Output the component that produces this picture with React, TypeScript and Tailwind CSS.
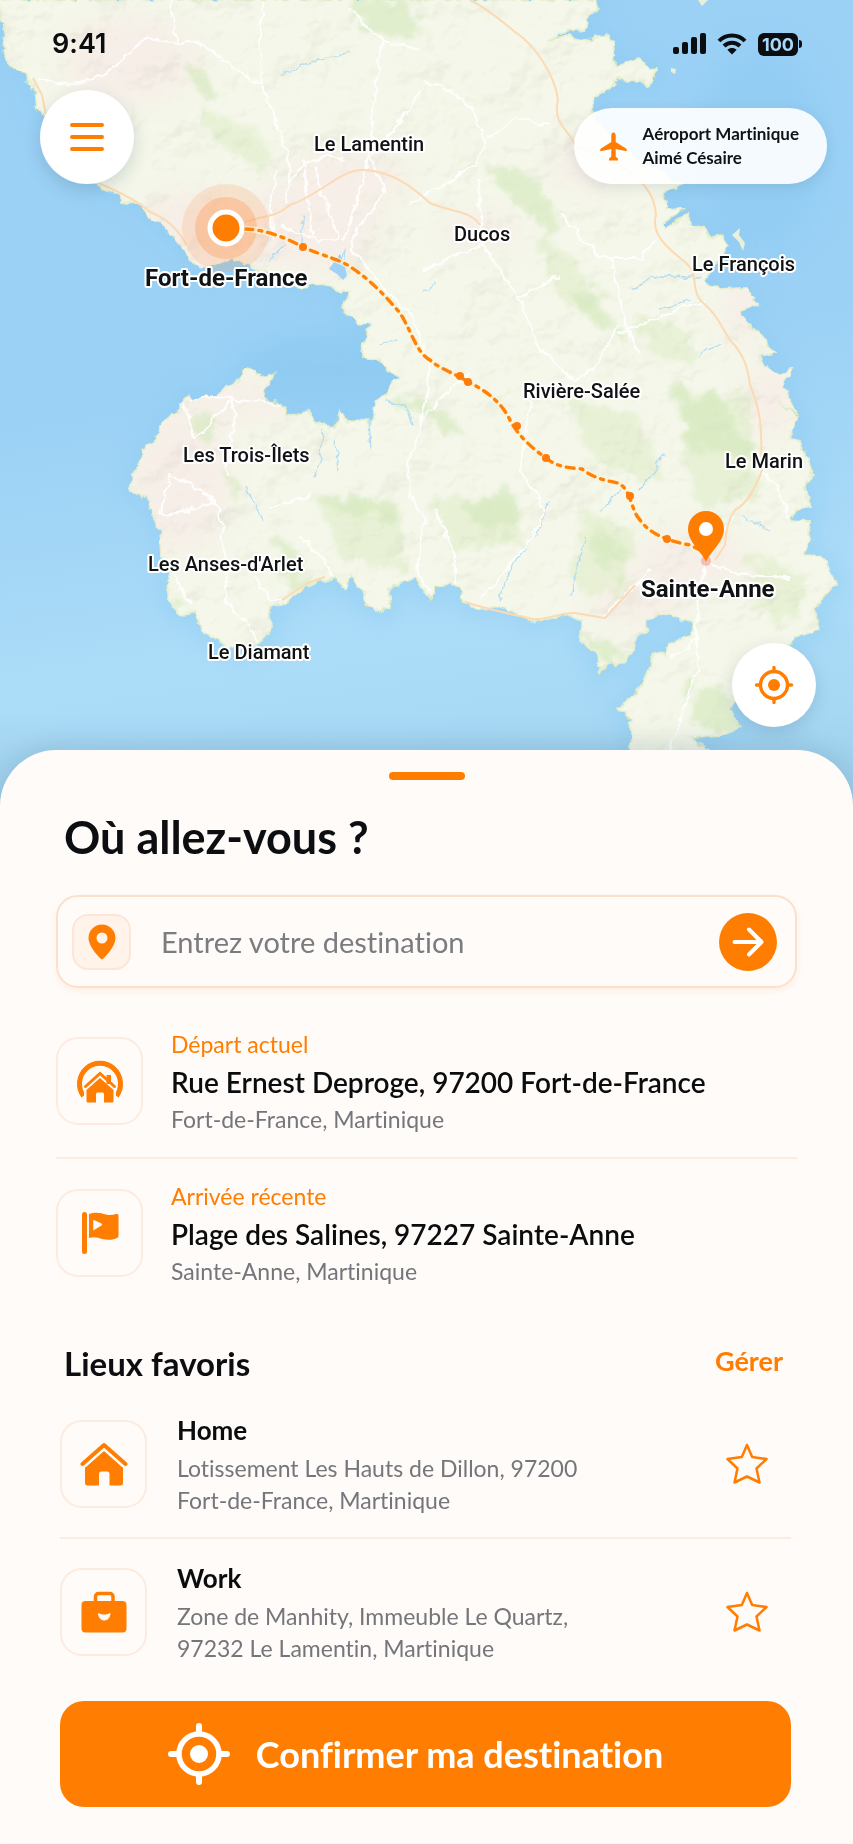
import type { ReactNode } from "react";

const LAND =
  "M0 0 L0 18 L4 32 L2 50 L8 62 L14 70 L25 73 L33 85 L35 98 L36 110 L46 116 L60 140 L80 168 L96 184 L103 188 L118 194 L122 201 L140 203 L150 218 L163 226 L174 236 L184 250 L192 264 L202 268 L218 262 L232 257 L246 265 L262 271 L282 277 L303 290 L310 282 L330 287 L350 292 L342 308 L358 322 L370 325 L364 342 L363 358 L382 362 L392 374 L400 378 L383 396 L375 402 L371 422 L360 418 L348 424 L340 411 L334 428 L322 424 L314 420 L309 410 L303 415 L287 413 L278 402 L265 400 L263 390 L274 375 L262 378 L248 369 L237 381 L214 396 L195 401 L187 394 L180 410 L166 418 L159 428 L157 440 L142 449 L143 458 L134 472 L130 490 L146 498 L152 515 L160 530 L162 553 L170 572 L167 592 L172 608 L182 616 L195 612 L202 630 L220 642 L236 650 L256 645 L272 628 L270 609 L284 603 L300 592 L318 581 L336 577 L346 590 L352 576 L362 590 L365 603 L382 613 L390 605 L388 588 L404 584 L415 577 L424 592 L432 598 L436 587 L450 581 L462 590 L464 602 L480 609 L502 607 L533 621 L565 614 L583 621 L580 640 L597 655 L600 673 L612 660 L617 665 L630 655 L637 638 L648 630 L647 620 L659 613 L675 618 L697 622 L691 637 L670 642 L666 655 L655 652 L650 668 L638 690 L618 709 L632 718 L630 750 L632 820 L712 820 L709 750 L690 739 L720 737 L741 727 L730 710 L745 690 L775 662 L795 638 L820 630 L815 610 L825 594 L835 583 L829 565 L818 556 L806 555 L810 521 L790 520 L800 507 L812 505 L804 490 L813 474 L800 442 L790 440 L795 416 L779 400 L795 412 L783 385 L793 368 L780 376 L768 371 L760 357 L774 352 L756 331 L742 318 L740 311 L757 305 L746 288 L720 289 L704 280 L716 264 L730 246 L722 235 L710 238 L705 228 L690 225 L688 214 L665 230 L662 224 L683 209 L666 208 L663 194 L682 185 L660 170 L620 150 L590 112 L598 94 L610 88 L620 78 L640 80 L650 88 L656 70 L640 61 L615 66 L613 42 L605 35 L592 40 L565 36 L546 42 L563 32 L585 30 L588 15 L598 10 L595 0 Z";

const ROUTE =
  "M245 229 C262 229 285 237 303 247 C325 257 340 259 352 268 C372 281 388 299 400 313 C412 332 416 352 430 360 C441 370 455 373 468 382 C485 390 500 401 509 418 C517 435 533 449 546 458 C558 468 572 468 582 469 C593 478 607 481 618 483 C632 490 630 509 640 520 C649 533 667 541 690 545 L700 550";

const WAYPOINTS = [
  [303, 247],
  [460, 376],
  [468, 382],
  [517, 426],
  [546, 458],
  [630, 496],
  [667, 539],
];

const PLACES = [
  { name: "Le Lamentin", x: 314, y: 151 },
  { name: "Ducos", x: 454, y: 241 },
  { name: "Le François", x: 692, y: 271 },
  { name: "Rivière-Salée", x: 523, y: 398 },
  { name: "Les Trois-Îlets", x: 183, y: 462 },
  { name: "Le Marin", x: 725, y: 468 },
  { name: "Les Anses-d'Arlet", x: 148, y: 571 },
  { name: "Le Diamant", x: 208, y: 659 },
];

const ROADS = [
  "M172 0 C170 20 178 30 177 45 L190 40 C215 48 222 62 240 72 C252 80 258 82 262 84",
  "M263 0 C262 30 258 60 262 84 C268 110 280 125 285 145 C292 160 290 180 285 205",
  "M177 45 C150 30 135 45 122 58 C110 75 70 95 36 78",
  "M420 50 C400 46 390 40 382 42 C378 70 374 110 370 150 C365 175 355 205 345 240",
  "M382 42 L366 26 L350 8 M420 90 L410 110 C400 120 385 140 370 158",
  "M370 158 L385 190 C370 220 350 230 352 250 L385 290 L412 316",
  "M340 238 C320 245 300 235 280 225 M345 160 C320 150 300 165 290 180",
  "M423 82 C450 88 470 100 478 125 L486 143 L476 165 C440 190 425 190 412 205",
  "M486 140 L515 118 L550 125 M478 180 L480 220 L483 245 L520 300 L540 350 C560 360 565 380 575 382 L600 360 L618 325",
  "M483 245 L455 255 L423 270 M520 297 L560 275 M560 215 L580 235 L600 258 L640 258 L655 240",
  "M618 335 L650 320 L680 308 L705 302 M610 258 L625 320 L640 355",
  "M423 420 C440 400 450 385 470 375 M530 400 L520 470 L545 510 L530 540 L480 600",
  "M412 316 L430 370 L420 430 C408 450 405 480 412 500 L425 520 C415 560 415 580 430 590",
  "M185 405 L195 440 L232 400 C240 420 225 450 228 475 M190 400 L215 396 C245 403 260 400 280 405",
  "M160 515 L170 475 L200 490 L218 505 C225 530 220 545 228 570 L226 605 L245 620 L258 642",
  "M160 515 L190 510 L215 500 M168 560 L190 605 M255 575 L270 600 L282 600",
  "M270 508 L310 495 M300 535 L325 560 L332 575",
  "M455 582 L455 555 L435 510 M705 562 L698 600 L697 640 L670 658 M697 640 L698 670 L680 720 L670 752",
  "M705 562 L745 575 L790 578 M735 515 L700 555 M760 470 L780 490 L790 520",
  "M650 570 L620 600 L600 618",
  "M315 165 L322 195 L330 215 L340 238 M305 160 L308 200 L312 235 M276 170 L270 205 L275 240",
];

const HIGHWAYS = [
  "M470 0 C490 10 500 20 515 32 C535 45 555 75 558 100 C552 125 570 130 575 145 L620 165 C650 185 655 200 656 215 C650 235 670 250 685 262 C700 275 690 285 700 300 C718 315 720 325 730 340 C745 355 748 370 750 385 C765 420 760 440 762 470 C755 490 745 505 735 510 C728 520 726 530 725 545 L715 560",
  "M245 222 C265 215 275 218 290 205 C320 195 340 170 362 170 C385 170 405 180 430 203 C450 212 470 210 480 225",
  "M33 78 L42 95 L46 115 M98 183 C120 192 140 203 150 212 C170 220 180 232 186 245",
  "M282 600 C295 592 305 582 325 577 M465 602 C490 610 515 615 533 619 C550 620 560 612 575 613 L605 618 L635 585",
];

const WOODS = [
  "M365 0 L410 0 L420 30 L400 40 L370 35 L352 22 Z",
  "M185 60 L205 75 L215 105 L200 95 Z",
  "M530 170 L545 190 L540 205 L532 190 Z",
  "M480 160 L520 175 L540 180 L560 235 L548 250 L540 220 L510 200 Z",
  "M575 290 L610 290 L600 300 L622 335 L605 330 L580 310 Z",
  "M670 390 L700 400 L720 395 L740 435 L760 445 L740 460 L690 450 L685 430 Z",
  "M190 420 L210 408 L216 425 L205 440 L196 435 Z",
  "M225 470 L245 490 L240 505 L228 490 Z",
  "M315 495 L370 495 L400 510 L380 520 L320 505 Z",
  "M275 535 L295 550 L310 585 L290 590 L280 560 Z",
  "M385 395 L430 402 L430 415 L392 402 Z",
  "M470 510 L505 485 L525 520 L500 530 L475 525 Z",
  "M600 530 L625 545 L610 575 L595 560 Z",
  "M695 685 L725 690 L740 725 L720 735 L690 720 Z",
  "M168 592 L188 605 L180 616 L170 605 Z",
  "M585 635 L625 650 L600 672 L598 655 Z",
  "M423 405 L455 420 L470 440 L440 432 Z",
];

const GROVES = [
  "M200 110 L260 130 L275 165 L240 160 L215 140 Z",
  "M540 240 L575 260 L600 320 L570 310 L550 280 Z",
  "M570 400 L640 410 L660 480 L610 470 L580 440 Z",
  "M680 390 L750 395 L755 500 L700 510 L685 460 Z",
  "M320 500 L400 505 L410 570 L340 560 Z",
  "M580 510 L640 530 L620 600 L575 590 Z",
  "M430 500 L520 495 L520 540 L450 550 Z",
  "M640 320 L700 330 L690 360 L640 350 Z",
  "M750 560 L810 570 L800 620 L750 610 Z",
];

const URBAN = [
  [195, 235, 70, 45],
  [310, 225, 70, 50],
  [350, 180, 60, 30],
  [180, 480, 50, 75],
  [240, 400, 60, 20],
  [480, 232, 40, 18],
  [745, 310, 22, 36],
  [770, 400, 26, 40],
  [690, 560, 60, 28],
  [640, 600, 50, 26],
  [130, 60, 70, 45],
  [590, 165, 40, 24],
];

const STREAMS = [
  "M280 75 C300 68 308 60 315 60 C330 58 340 55 350 52",
  "M303 215 C300 225 303 235 302 248 M270 260 L285 245 M334 262 L345 252 L340 280",
  "M322 430 L320 460 L315 475 M368 420 L370 450 M335 440 L338 470",
  "M500 600 L510 570 L540 525 L550 500 M570 595 L580 555 L585 540",
  "M640 490 L665 455 M600 510 L625 485 M630 290 L660 275 L700 278",
  "M245 485 L262 520 M423 290 L435 285 M770 530 L740 515",
  "M660 310 L690 300 M700 355 L720 345 M380 345 L395 340 M385 400 L405 405 L412 425",
];

function MartiniqueMap() {
  return (
    <svg viewBox="0 0 853 820" className="block h-auto w-full" role="img" aria-label="Carte du sud de la Martinique">
      <defs>
        <linearGradient id="sea" x1="0" y1="0" x2="0.15" y2="1">
          <stop offset="0" stopColor="#9bd1f5" />
          <stop offset="0.5" stopColor="#9bd1f5" />
          <stop offset="0.82" stopColor="#abdcf8" />
          <stop offset="1" stopColor="#a6d8f4" />
        </linearGradient>
        <linearGradient id="sheetShade" x1="0" y1="0" x2="0" y2="1">
          <stop offset="0" stopColor="#5b7f96" stopOpacity="0" />
          <stop offset="1" stopColor="#5b7f96" stopOpacity="0.18" />
        </linearGradient>
        <filter id="coast" x="-2%" y="-2%" width="104%" height="104%">
          <feTurbulence type="fractalNoise" baseFrequency="0.09" numOctaves="3" seed="4" />
          <feDisplacementMap in="SourceGraphic" scale="9" xChannelSelector="R" yChannelSelector="G" />
        </filter>
        <filter id="relief" x="0" y="0" width="100%" height="100%" colorInterpolationFilters="sRGB">
          <feTurbulence type="fractalNoise" baseFrequency="0.016 0.02" numOctaves="4" seed="11" result="n" />
          <feDiffuseLighting in="n" surfaceScale="6" diffuseConstant="1.18" lightingColor="#ffffff">
            <feDistantLight azimuth="225" elevation="60" />
          </feDiffuseLighting>
          <feColorMatrix
            type="matrix"
            values="0.5 0 0 0 0.5  0 0.5 0 0 0.5  0 0 0.5 0 0.48  0 0 0 1 0"
          />
        </filter>
        <filter id="soft" x="-50%" y="-50%" width="200%" height="200%">
          <feGaussianBlur stdDeviation="14" />
        </filter>
        <filter id="softSmall" x="-30%" y="-30%" width="160%" height="160%">
          <feTurbulence type="fractalNoise" baseFrequency="0.06" numOctaves="3" seed="8" result="t" />
          <feDisplacementMap in="SourceGraphic" in2="t" scale="38" result="d" />
          <feGaussianBlur in="d" stdDeviation="2" />
        </filter>
        <filter id="depth" x="-10%" y="-10%" width="120%" height="120%">
          <feGaussianBlur stdDeviation="9" />
        </filter>
        <clipPath id="landClip">
          <path d={LAND} />
        </clipPath>
      </defs>

      <rect width="853" height="820" fill="url(#sea)" />
      <ellipse cx="330" cy="370" rx="90" ry="40" fill="#88c6f1" opacity="0.5" filter="url(#soft)" />
      <ellipse cx="760" cy="150" rx="70" ry="110" fill="#8ac8f2" opacity="0.4" filter="url(#soft)" />
      <path d={LAND} fill="none" stroke="#8ecaf2" strokeWidth="16" opacity="0.5" filter="url(#depth)" />

      <g filter="url(#coast)">
        <path d={LAND} fill="#eff3e1" stroke="#e0edca" strokeWidth="2" />
        <g clipPath="url(#landClip)">
          {URBAN.map(([cx, cy, rx, ry]) => (
            <ellipse key={`${cx}-${cy}`} cx={cx} cy={cy} rx={rx} ry={ry} fill="#f6eee8" filter="url(#soft)" />
          ))}
          <g fill="#dfedc9" opacity="0.6" filter="url(#softSmall)">
            {GROVES.map((d) => (
              <path key={d} d={d} />
            ))}
          </g>
          <rect width="853" height="820" filter="url(#relief)" className="mix-blend-multiply" opacity="0.32" />
          <g fill="#d3e8bb" opacity="0.6" filter="url(#softSmall)">
            {WOODS.map((d) => (
              <path key={d} d={d} />
            ))}
          </g>
        </g>
      </g>
      <g fill="#e8f0d8">
        <path d="M732 235 l8 -7 l-1 7 l6 8 l-2 8 l-4 -9z" />
        <path d="M671 68 l5 1 l-1 5 l-4 -2z" />
        <path d="M698 0 h10 l-6 6z" />
      </g>
      <g fill="none" stroke="#b2dcf3" strokeWidth="1.3" strokeLinecap="round" filter="url(#coast)">
        {STREAMS.map((d) => (
          <path key={d} d={d} />
        ))}
      </g>
      <path d="M340 254 l4 8 l3 14 l-4 4 l-6 -6 l-8 -5z" fill="#9fd2f4" />
      <g fill="none" stroke="#ffffff" strokeWidth="2" strokeLinejoin="round" opacity="0.9" filter="url(#coast)">
        {ROADS.map((d) => (
          <path key={d} d={d} />
        ))}
      </g>
      <g fill="none" stroke="#fcdab3" strokeWidth="2" strokeLinejoin="round">
        {HIGHWAYS.map((d) => (
          <path key={d} d={d} />
        ))}
      </g>

      <circle cx="226" cy="228" r="44" fill="#ff8a3a" opacity="0.16" />
      <circle cx="226" cy="228" r="31" fill="#ff7f2a" opacity="0.26" />
      <path d={ROUTE} fill="none" stroke="#fff3d6" strokeWidth="6" opacity="0.75" />
      <path d={ROUTE} fill="none" stroke="#ff8208" strokeWidth="3.4" strokeLinecap="round" strokeDasharray="8 6 3 6" />
      {WAYPOINTS.map(([cx, cy]) => (
        <circle key={cx} cx={cx} cy={cy} r="4" fill="#ff7c08" />
      ))}
      <circle cx="226" cy="228" r="16" fill="#ff7d00" stroke="#fff" strokeWidth="5" />

      <circle cx="706" cy="561" r="5" fill="#f3a89a" opacity="0.7" />
      <path
        d="M706 562 C702 552 688 542 688 529 A18 18 0 0 1 724 529 C724 542 710 552 706 562Z"
        fill="#ff7d00"
      />
      <circle cx="706" cy="529" r="7" fill="#fff" />

      <g
        className="font-['Roboto','Liberation_Sans',sans-serif]"
        fill="#101214"
        stroke="#ffffff"
        strokeWidth="4"
        strokeLinejoin="round"
        paintOrder="stroke"
      >
        {PLACES.map((p) => (
          <text key={p.name} x={p.x} y={p.y} fontSize="20" fontWeight="500">
            {p.name}
          </text>
        ))}
        <text x="145" y="286" fontSize="24" fontWeight="700">
          Fort-de-France
        </text>
        <text x="641" y="597" fontSize="24" fontWeight="700">
          Sainte-Anne
        </text>
      </g>
      <rect y="715" width="853" height="105" fill="url(#sheetShade)" />
    </svg>
  );
}

function StatusBar() {
  return (
    <div className="flex items-center justify-between pr-[51px] pl-[52px] font-['Inter','Liberation_Sans',sans-serif] text-[#0b0d10]">
      <span className="text-[27px] leading-8 font-semibold">9:41</span>
      <div className="flex items-center gap-[11px]">
        <svg width="33" height="22" viewBox="0 0 33 22" fill="currentColor" aria-hidden="true">
          <rect x="0" y="14" width="6" height="7" rx="2" />
          <rect x="9" y="9" width="6" height="12" rx="2" />
          <rect x="18" y="4" width="6" height="17" rx="2" />
          <rect x="27" y="0" width="6" height="21" rx="2" />
        </svg>
        <svg width="30" height="22" viewBox="0 0 30 22" fill="none" stroke="currentColor" strokeWidth="4" aria-hidden="true">
          <path d="M2 8 C9 0.500 21 0.500 28 8" />
          <path d="M7 13 C11.500 8.500 18.500 8.500 23 13" />
          <path d="M15 21.500 L10.300 16.800 C13 14.300 17 14.300 19.700 16.800Z" fill="currentColor" stroke="none" />
        </svg>
        <div className="flex items-center gap-px">
          <span className="rounded-md bg-[#0b0d10] px-1 text-[18px] leading-[23px] font-bold text-[#a9d9f8]">100</span>
          <span className="h-2 w-[3px] rounded-r-sm bg-[#0b0d10]" />
        </div>
      </div>
    </div>
  );
}

function LocateIcon() {
  return (
    <svg className="size-10" viewBox="0 0 40 40" fill="none" stroke="currentColor" strokeWidth="3.400" strokeLinecap="round" aria-hidden="true">
      <circle cx="20" cy="20" r="13.500" />
      <circle cx="20" cy="20" r="6" fill="currentColor" stroke="none" />
      <path d="M20 2.500v4M20 33.500v4M2.500 20h4M33.500 20h4" />
    </svg>
  );
}

function TargetIcon() {
  return (
    <svg className="size-[62px]" viewBox="0 0 62 62" fill="none" stroke="currentColor" strokeLinecap="round" aria-hidden="true">
      <circle cx="31" cy="31" r="20" strokeWidth="5.500" />
      <circle cx="31" cy="31" r="9" fill="currentColor" stroke="none" />
      <path d="M31 3v7M31 52v7M3 31h7M52 31h7" strokeWidth="6" />
    </svg>
  );
}

function PinIcon() {
  return (
    <svg width="28" height="36" viewBox="0 0 28 36" aria-hidden="true">
      <path
        fillRule="evenodd"
        fill="currentColor"
        d="M14 35.500 C13 35.500 0.500 23 0.500 14 A13.500 13.500 0 0 1 27.500 14 C27.500 23 15 35.500 14 35.500Z M14 8.500a5.500 5.500 0 1 0 0 11a5.500 5.500 0 0 0 0-11z"
      />
    </svg>
  );
}

function CurrentHomeIcon() {
  return (
    <svg width="48" height="46" viewBox="0 0 48 46" fill="none" aria-hidden="true">
      <path d="M7.500 38 A20.500 20.500 0 1 1 40.500 38" stroke="currentColor" strokeWidth="5" />
      <path d="M10 30 L24 17.500 L38 30" stroke="#fffbf8" strokeWidth="9" />
      <path d="M30.500 17h4.500v9h-4.500z" fill="currentColor" />
      <path d="M9.500 28.500 L24 15.500 L38.500 28.500" stroke="currentColor" strokeWidth="3" strokeLinecap="round" />
      <path d="M8 32 h32 v13 h-32z" fill="#fffbf8" />
      <path d="M24 20 L37.500 32 V43 a1.500 1.500 0 0 1 -1.500 1.500 H28 V36 a1.500 1.500 0 0 0 -1.500 -1.500 h-5 A1.500 1.500 0 0 0 20 36 V44.500 H12 A1.500 1.500 0 0 1 10.500 43 V32Z" fill="currentColor" />
    </svg>
  );
}

function FlagIcon() {
  return (
    <svg width="38" height="44" viewBox="0 0 38 44" fill="currentColor" aria-hidden="true">
      <rect x="1" y="1" width="5" height="42" rx="2.500" />
      <path
        fillRule="evenodd"
        d="M8 3 C15 0.500 20 2 25 3.500 C29 4.500 32 4 35 3 C36.500 2.600 37.500 3.200 37.500 4.500 V24 C37.500 26 37 26.800 35.500 27.300 C29 30 22 28.500 17 26.800 C13.500 25.800 11 26 8 27Z M12.300 8.800 V19.500 L20.500 14.500 C21.500 13.800 21 12.800 20 12.300Z"
      />
    </svg>
  );
}

function HouseIcon() {
  return (
    <svg width="48" height="44" viewBox="0 0 48 44" fill="none" aria-hidden="true">
      <path d="M2.500 22 L24 3 L45.500 22" stroke="currentColor" strokeWidth="4" strokeLinecap="round" strokeLinejoin="round" />
      <path
        fill="currentColor"
        d="M24 8.500 L43 25.500 V41 a2.500 2.500 0 0 1 -2.500 2.500 H29.500 V32 a2.500 2.500 0 0 0 -2.500 -2.500 h-5.500 A2.500 2.500 0 0 0 19 32 V43.500 H7.500 A2.500 2.500 0 0 1 5 41 V25.500Z"
      />
      <path d="M5 24.500 L24 7.800 L43 24.500" stroke="#fffbf8" strokeWidth="1.800" />
    </svg>
  );
}

function BriefcaseIcon() {
  return (
    <svg width="46" height="42" viewBox="0 0 46 42" fill="none" aria-hidden="true">
      <path d="M14.500 12 V5.500 a3 3 0 0 1 3 -3 h11.500 a3 3 0 0 1 3 3 V12" stroke="currentColor" strokeWidth="3.500" />
      <rect x="0.500" y="10" width="45" height="31.500" rx="4" fill="currentColor" />
      <path d="M17.500 22.500 C18 27 20 29 23.300 29 C26.500 29 28.700 27 29 22.500 C25.500 24.500 21 24.500 17.500 22.500Z" fill="#fffbf8" stroke="#fffbf8" strokeLinejoin="round" />
    </svg>
  );
}

function StarIcon() {
  return (
    <svg width="42" height="42" viewBox="0 0 42 42" fill="none" stroke="currentColor" strokeWidth="2.500" strokeLinejoin="round" aria-hidden="true">
      <path d="M21 2 L26.200 14 L40.500 16 L30.500 25.500 L33.500 39.500 L21 33.500 L8.500 39.500 L11.500 25.500 L1.500 16 L15.800 14Z" />
    </svg>
  );
}

function Tile({ children }: { children: ReactNode }) {
  return (
    <div className="flex h-[88px] w-[87px] shrink-0 items-center justify-center rounded-[22px] border-2 border-[#fdebdf] text-[#ff7d00]">
      {children}
    </div>
  );
}

function TripRow({ icon, label, title, detail }: { icon: ReactNode; label: string; title: string; detail: string }) {
  return (
    <div className="flex items-center gap-7">
      <Tile>{icon}</Tile>
      <div>
        <p className="text-[23px] leading-9 text-[#ff7d00]">{label}</p>
        <p className="text-[28px] leading-10 font-semibold text-[#0b0c0e]">{title}</p>
        <p className="text-[23px] leading-[34px] text-[#74767b]">{detail}</p>
      </div>
    </div>
  );
}

function FavoriteRow({ icon, title, lines }: { icon: ReactNode; title: string; lines: string[] }) {
  return (
    <li className="flex items-center">
      <Tile>{icon}</Tile>
      <div className="ml-[30px] flex flex-1 flex-col gap-1">
        <h3 className="text-[26px] leading-9 font-bold text-[#0b0c0e]">{title}</h3>
        <p className="text-[23px] leading-8 text-[#74767b]">
          {lines.map((line) => (
            <span key={line} className="block">
              {line}
            </span>
          ))}
        </p>
      </div>
      <button type="button" aria-label={`Favori : ${title}`} className="mr-[23px] text-[#ff7d00]">
        <StarIcon />
      </button>
    </li>
  );
}

export default function App() {
  return (
    <main className="min-h-screen bg-[#fffbf8] font-['Lato','Liberation_Sans',sans-serif] [font-variant-ligatures:none]">
      <section className="relative overflow-hidden">
        <MartiniqueMap />
        <div className="absolute inset-x-0 top-7">
          <StatusBar />
        </div>
        <button
          type="button"
          aria-label="Menu"
          className="absolute top-[90px] left-10 flex size-[94px] items-center justify-center rounded-full bg-white text-[#ff7d00] shadow-[0_6px_18px_rgba(40,70,100,0.18)]"
        >
          <svg width="34" height="28" viewBox="0 0 34 28" stroke="currentColor" strokeWidth="4" strokeLinecap="round" aria-hidden="true">
            <path d="M2 2h30M2 14h30M2 26h30" />
          </svg>
        </button>
        <button
          type="button"
          className="absolute top-[108px] right-[26px] flex items-center gap-4 rounded-full bg-white/90 py-[14px] pr-7 pl-[26px] text-left text-[#101214] shadow-[0_4px_14px_rgba(40,70,100,0.12)]"
        >
          <svg width="27" height="29" viewBox="0 0 27 29" fill="#ff7d00" aria-hidden="true">
            <path d="M13.500 0.500 C15 0.500 15.700 2 15.700 4 V10 L26 16.500 C26.800 17.200 27 18.500 26.500 19.300 L15.700 17 V24.500 L18 26.800 V28.500 H9 V26.800 L11.300 24.500 V17 L0.500 19.300 C0 18.500 0.200 17.200 1 16.500 L11.300 10 V4 C11.300 2 12 0.500 13.500 0.500Z" />
          </svg>
          <span className="text-[17px] leading-6 font-bold">
            Aéroport Martinique
            <br />
            Aimé Césaire
          </span>
        </button>
        <button
          type="button"
          aria-label="Ma position"
          className="absolute right-[37px] bottom-[93px] flex size-[84px] items-center justify-center rounded-full bg-white text-[#ff7d00] shadow-[0_6px_18px_rgba(40,70,100,0.18)]"
        >
          <LocateIcon />
        </button>
      </section>

      <section className="relative -mt-[70px] rounded-t-[56px] bg-[#fffbf8] px-14 pt-[22px] pb-9 shadow-[0_-6px_20px_rgba(40,70,100,0.12)]">
        <div className="mx-auto h-2 w-[76px] rounded-full bg-[#ff7d00]" />
        <h1 className="mt-[29px] pl-2 text-[45px] leading-[56px] font-bold text-[#0d0e12]">Où allez-vous ?</h1>

        <form className="mt-[30px] flex h-[93px] items-center rounded-[22px] border-2 border-[#fbe0cc] pr-[18px] pl-[14px] shadow-[0_3px_6px_rgba(240,170,110,0.14)]">
          <label
            htmlFor="destination"
            aria-label="Destination"
            className="flex h-14 w-[59px] items-center justify-center rounded-2xl border-2 border-[#fde6d6] bg-[#fff3ea] text-[#ff7d00]"
          >
            <PinIcon />
          </label>
          <input
            id="destination"
            type="text"
            placeholder="Entrez votre destination"
            className="ml-[30px] h-full min-w-0 flex-1 bg-transparent text-[29px] text-[#0b0c0e] outline-none placeholder:text-[#7a7c80]"
          />
          <button type="button" aria-label="Rechercher" className="flex size-[58px] items-center justify-center rounded-full bg-[#ff7d00] text-white">
            <svg width="32" height="30" viewBox="0 0 32 30" fill="none" stroke="currentColor" strokeWidth="4" strokeLinecap="round" strokeLinejoin="round" aria-hidden="true">
              <path d="M2.500 15H29M17 2.500L29.500 15L17 27.500" />
            </svg>
          </button>
        </form>

        <div className="mt-[38px] flex flex-col">
          <TripRow
            icon={<CurrentHomeIcon />}
            label="Départ actuel"
            title="Rue Ernest Deproge, 97200 Fort-de-France"
            detail="Fort-de-France, Martinique"
          />
          <hr className="mt-[21px] mb-[19px] border-t-2 border-[#fdebdf]" />
          <TripRow
            icon={<FlagIcon />}
            label="Arrivée récente"
            title="Plage des Salines, 97227 Sainte-Anne"
            detail="Sainte-Anne, Martinique"
          />
        </div>

        <div className="mt-[55px] flex items-start justify-between pr-[14px] pl-2">
          <h2 className="text-[33px] leading-10 font-bold text-[#0d0e12]">Lieux favoris</h2>
          <button type="button" className="text-[27px] leading-9 font-bold text-[#ff7d00]">
            Gérer
          </button>
        </div>

        <div className="pr-1.5 pl-1">
          <ul className="mt-[29px]">
            <FavoriteRow
              icon={<HouseIcon />}
              title="Home"
              lines={["Lotissement Les Hauts de Dillon, 97200", "Fort-de-France, Martinique"]}
            />
            <li aria-hidden="true" className="mt-[21px] mb-[21px] h-0.5 bg-[#fdebdf]" />
            <FavoriteRow
              icon={<BriefcaseIcon />}
              title="Work"
              lines={["Zone de Manhity, Immeuble Le Quartz,", "97232 Le Lamentin, Martinique"]}
            />
          </ul>

          <button
            type="button"
            className="mt-[37px] flex h-[106px] w-full items-center justify-center gap-[26px] rounded-3xl bg-[#ff7d00] pr-5 text-[36px] font-bold text-white"
          >
            <TargetIcon />
            Confirmer ma destination
          </button>
        </div>
      </section>
    </main>
  );
}
